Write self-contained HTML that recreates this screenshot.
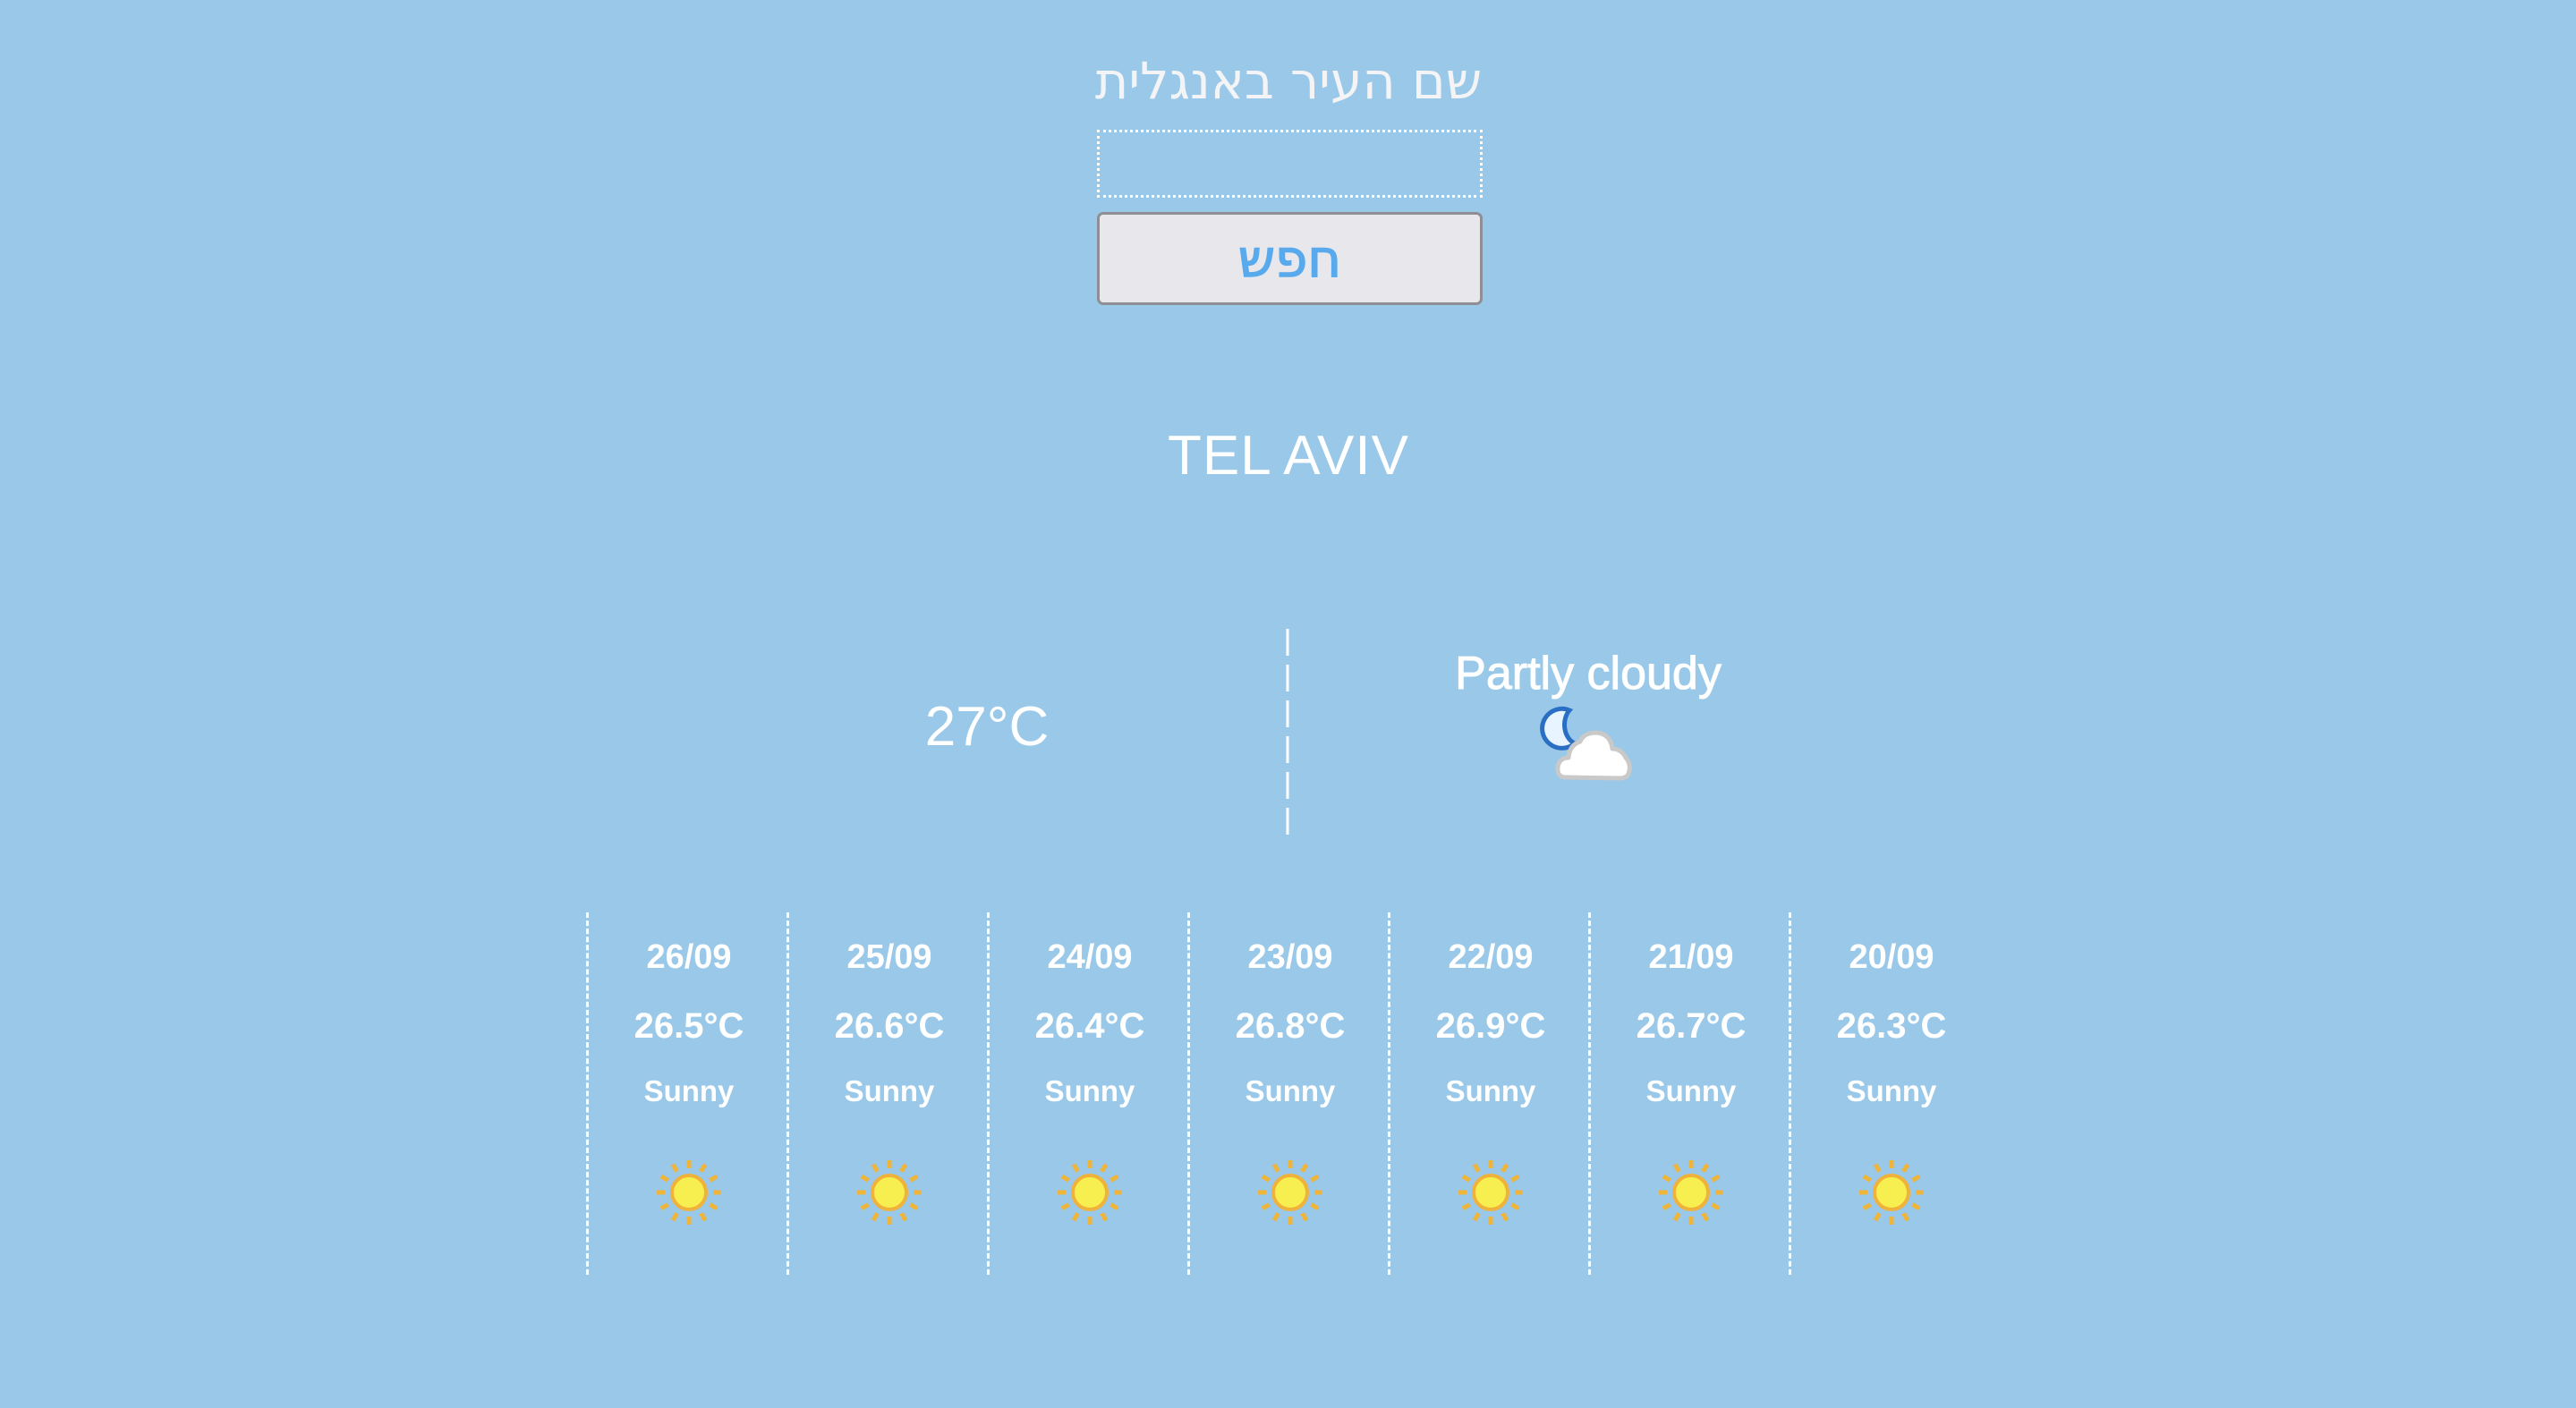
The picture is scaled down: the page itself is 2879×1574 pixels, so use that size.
<!DOCTYPE html>
<html><head><meta charset="utf-8"><style>
html,body{margin:0;padding:0}
body{width:2879px;height:1574px;background:#99c8e8;position:relative;overflow:hidden;font-family:"Liberation Sans","DejaVu Sans",sans-serif;color:#fff}
.a{position:absolute}
.c{text-align:center}
.col{position:absolute;top:1020px;width:224px;height:405px;border-left:3px dashed #fff}
.d{position:absolute;left:0;width:224px;text-align:center;font-weight:bold}
</style></head><body>
<div class="a c" style="left:1140px;width:600px;top:56px;font-size:57px;line-height:70px;color:#f4f4f6;font-family:'DejaVu Sans',sans-serif" dir="rtl">שם העיר באנגלית</div>
<div class="a" style="left:1226px;top:145px;width:425px;height:70px;border:3px dotted #fff"></div>
<div class="a c" style="left:1226px;top:237px;width:425px;height:98px;background:#e8e8ec;border:3px solid #8e8e94;border-radius:7px;color:#58aaec;font-size:58px;line-height:98px;font-family:'DejaVu Sans',sans-serif;-webkit-text-stroke:1.5px #58aaec" dir="rtl">חפש</div>
<div class="a c" style="left:1140px;width:600px;top:472px;font-size:62px;line-height:76px;letter-spacing:1px">TEL AVIV</div>
<svg class="a" style="left:1436px;top:703px" width="6" height="230"><line x1="3" y1="0" x2="3" y2="230" stroke="#fff" stroke-width="3" stroke-dasharray="30 10"/></svg>
<div class="a c" style="left:900px;width:406px;top:775px;font-size:62px;line-height:76px">27°C</div>
<div class="a c" style="left:1500px;width:550px;top:722px;font-size:52px;line-height:62px;-webkit-text-stroke:1px #fff">Partly cloudy</div>
<svg class="a" style="left:1720px;top:785px" width="120" height="95" viewBox="0 0 120 95">
<path d="M34 9 A22 22 0 1 0 40 46 A17 22 0 0 1 34 9 Z" fill="#e8f4ff" stroke="#2a6fc4" stroke-width="5"/>
<path d="M30 84 Q20 84 21 72 Q23 62 33 62 Q34 48 46 44 Q50 34 64 34 Q80 35 82 52 Q92 52 97 62 Q104 70 100 80 Q98 85 90 85 Z" fill="#fff" stroke="#c9c9c9" stroke-width="5" stroke-linejoin="round"/>
</svg>
<div id="cols"></div>
<script>
var data=[["26/09","26.5"],["25/09","26.6"],["24/09","26.4"],["23/09","26.8"],["22/09","26.9"],["21/09","26.7"],["20/09","26.3"]];
var h="";
var rays="";
for(var i=0;i<12;i++){var a=i*30*Math.PI/180;rays+='<line x1="'+(40+27*Math.cos(a)).toFixed(1)+'" y1="'+(40+27*Math.sin(a)).toFixed(1)+'" x2="'+(40+36*Math.cos(a)).toFixed(1)+'" y2="'+(40+36*Math.sin(a)).toFixed(1)+'"/>';}
data.forEach(function(d,k){
h+='<div class="col" style="left:'+(655+k*224)+'px"><div class="d" style="top:28px;font-size:38px;line-height:44px">'+d[0]+'</div><div class="d" style="top:104px;font-size:40px;line-height:46px">'+d[1]+'°C</div><div class="d" style="top:180px;font-size:33px;line-height:40px">Sunny</div><svg style="position:absolute;left:72px;top:273px" width="80" height="80" viewBox="0 0 80 80"><g stroke="#efb43a" stroke-width="5">'+rays+'</g><circle cx="40" cy="40" r="19" fill="#f7ef50" stroke="#f0b23a" stroke-width="4"/></svg></div>';
});
document.getElementById("cols").innerHTML=h;
</script>
</body></html>
